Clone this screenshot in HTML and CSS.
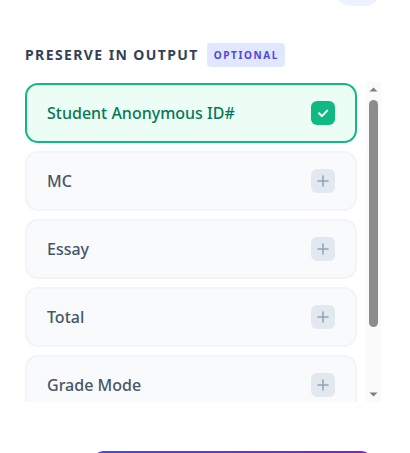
FILE: index.html
```html
<!DOCTYPE html>
<html lang="en">
<head>
<meta charset="utf-8">
<title>Preserve in output</title>
<link rel="stylesheet" href="styles.css">
</head>
<body>
<div class="panel">
  <div class="topbar"><span class="pill-btn"></span></div>

  <div class="section-head">
    <h2 class="section-title">Preserve in Output</h2>
    <span class="badge">Optional</span>
  </div>

  <div class="list-wrap">
    <div class="field-list">
      <div class="field selected">
        <span class="field-name">Student Anonymous ID#</span>
        <span class="toggle on">
          <svg viewBox="0 0 24 24" width="24" height="24"><path d="M8 12.3 L10.9 15.1 L16.2 9.6" fill="none" stroke="#fff" stroke-width="2" stroke-linecap="round" stroke-linejoin="round"/></svg>
        </span>
      </div>
      <div class="field">
        <span class="field-name">MC</span>
        <span class="toggle">
          <svg viewBox="0 0 24 24" width="24" height="24"><path d="M12 7 V17 M7 12 H17" fill="none" stroke="#94a3b8" stroke-width="1.6" stroke-linecap="round"/></svg>
        </span>
      </div>
      <div class="field">
        <span class="field-name">Essay</span>
        <span class="toggle">
          <svg viewBox="0 0 24 24" width="24" height="24"><path d="M12 7 V17 M7 12 H17" fill="none" stroke="#94a3b8" stroke-width="1.6" stroke-linecap="round"/></svg>
        </span>
      </div>
      <div class="field">
        <span class="field-name">Total</span>
        <span class="toggle">
          <svg viewBox="0 0 24 24" width="24" height="24"><path d="M12 7 V17 M7 12 H17" fill="none" stroke="#94a3b8" stroke-width="1.6" stroke-linecap="round"/></svg>
        </span>
      </div>
      <div class="field">
        <span class="field-name">Grade Mode</span>
        <span class="toggle">
          <svg viewBox="0 0 24 24" width="24" height="24"><path d="M12 7 V17 M7 12 H17" fill="none" stroke="#94a3b8" stroke-width="1.6" stroke-linecap="round"/></svg>
        </span>
      </div>
      <div class="field">
        <span class="field-name">Section</span>
        <span class="toggle">
          <svg viewBox="0 0 24 24" width="24" height="24"><path d="M12 7 V17 M7 12 H17" fill="none" stroke="#94a3b8" stroke-width="1.6" stroke-linecap="round"/></svg>
        </span>
      </div>
    </div>
    <div class="scrollbar" aria-hidden="true">
      <span class="sb-btn"><svg viewBox="0 0 15 15" width="15" height="15"><path d="M3.5 9.5 L7.5 5.5 L11.5 9.5 Z" fill="#7f7f7f"/></svg></span>
      <span class="sb-track"><span class="sb-thumb"></span></span>
      <span class="sb-btn"><svg viewBox="0 0 15 15" width="15" height="15"><path d="M3.5 5.5 L7.5 9.5 L11.5 5.5 Z" fill="#7f7f7f"/></svg></span>
    </div>
  </div>

  <div class="footer">
    <div class="primary-btn"></div>
  </div>
</div>
</body>
</html>
```

FILE: styles.css
```css
html, body {
  margin: 0;
  padding: 0;
  height: 100%;
  overflow: hidden;
  background: #ffffff;
}

body {
  font-family: "Noto Sans", "Open Sans", sans-serif;
  color: #334155;
}

.panel {
  padding: 0 29px 0 25px;
}

.topbar {
  display: flex;
  justify-content: flex-end;
}

.pill-btn {
  display: block;
  width: 45px;
  height: 30px;
  margin-top: -24px;
  margin-right: 1px;
  border-radius: 15px;
  background: #eef2ff;
}

.section-head {
  display: flex;
  align-items: center;
  gap: 8px;
  margin-top: 37px;
  height: 24px;
}

.section-title {
  margin: 0;
  font-size: 14px;
  font-weight: 700;
  letter-spacing: 1.4px;
  text-transform: uppercase;
  color: #334155;
  line-height: 24px;
}

.badge {
  display: inline-flex;
  align-items: center;
  height: 24px;
  padding: 0 6px 0 7px;
  border-radius: 4px;
  background: #e0e7ff;
  color: #4f46e5;
  font-size: 10px;
  font-weight: 700;
  letter-spacing: 1.6px;
  text-transform: uppercase;
  box-sizing: border-box;
}

.list-wrap {
  display: flex;
  margin-top: 15px;
  height: 320px;
}

.field-list {
  flex: 1;
  overflow: hidden;
  padding: 1px 9px 1px 0;
  display: flex;
  flex-direction: column;
  gap: 8px;
}

.scrollbar {
  width: 15px;
  flex: 0 0 15px;
  display: flex;
  flex-direction: column;
  background: #fafafa;
}

.sb-btn {
  display: block;
  height: 15px;
  flex: 0 0 15px;
}

.sb-btn svg {
  display: block;
}

.sb-track {
  flex: 1;
  display: flex;
  flex-direction: column;
  padding: 3px 3px 0 3px;
}

.sb-thumb {
  display: block;
  height: 227px;
  border-radius: 5px;
  background: #8c8c8c;
}

.field {
  flex: 0 0 60px;
  height: 60px;
  box-sizing: border-box;
  display: flex;
  align-items: center;
  justify-content: space-between;
  padding: 0 20px;
  border: 2px solid #f1f5f9;
  border-radius: 13px;
  background: #f8fafc;
}

.field-name {
  font-size: 16px;
  font-weight: 500;
  color: #475569;
}

.field.selected {
  border-color: #10b981;
  background: #ecfdf5;
}

.field.selected .field-name {
  color: #047857;
}

.toggle {
  display: flex;
  width: 24px;
  height: 24px;
  border-radius: 6px;
  background: #e2e8f0;
}

.toggle.on {
  background: #10b981;
}

.footer {
  display: flex;
  justify-content: flex-end;
  margin-top: 49px;
}

.primary-btn {
  width: 281px;
  height: 46px;
  margin-right: 8px;
  border-radius: 12px;
  background: linear-gradient(90deg, #4f46e5, #7e22ce);
}
```
